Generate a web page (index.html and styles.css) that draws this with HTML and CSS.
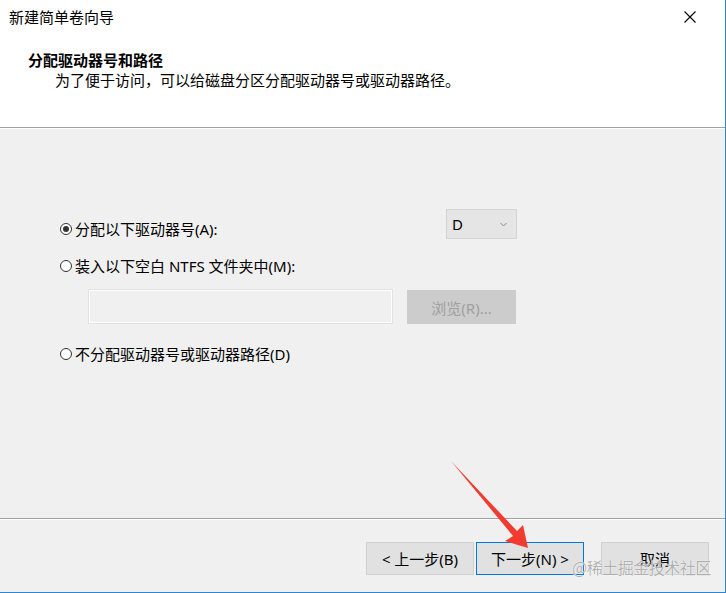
FILE: index.html
```html
<!DOCTYPE html>
<html lang="zh-CN">
<head>
<meta charset="utf-8">
<title>新建简单卷向导</title>
<link rel="stylesheet" href="styles.css">
</head>
<body>
<div class="window">
  <header class="header">
    <div class="titlebar">
      <span class="title">新建简单卷向导</span>
      <svg class="close" width="12" height="12" viewBox="0 0 12 12"><path d="M0.5 0.5L11.5 11.5M11.5 0.5L0.5 11.5" stroke="#000" stroke-width="1.1" fill="none"/></svg>
    </div>
    <h1 class="heading">分配驱动器号和路径</h1>
    <p class="subtitle">为了便于访问，可以给磁盘分区分配驱动器号或驱动器路径。</p>
  </header>
  <main class="body">
    <div class="row row-first">
      <label class="option option-first"><span class="radio checked"></span>分配以下驱动器号(A):</label>
      <div class="select"><span>D</span><svg width="7" height="5" viewBox="0 0 7 5"><path d="M0.5 1L3.5 4L6.5 1" stroke="#8a8a8a" stroke-width="1" fill="none"/></svg></div>
    </div>
    <label class="option option-second"><span class="radio"></span>装入以下空白 NTFS 文件夹中(M):</label>
    <div class="path-row">
      <div class="textbox"></div>
      <div class="browse">浏览(R)...</div>
    </div>
    <label class="option option-third"><span class="radio"></span>不分配驱动器号或驱动器路径(D)</label>
  </main>
  <footer class="footer">
    <div class="btn">&lt; 上一步(B)</div>
    <div class="btn btn-default">下一步(N) &gt;</div>
    <div class="btn btn-cancel">取消</div>
  </footer>
  <svg class="arrow" width="726" height="593" viewBox="0 0 726 593"><polygon points="451,461 517,531 523,525 528,548 505,541 513,536" fill="#f23b30"/></svg>
  <span class="watermark">@稀土掘金技术社区</span>
</div>
</body>
</html>
```
FILE: styles.css
```css
html, body {
  margin: 0;
  padding: 0;
}
body {
  width: 726px;
  height: 593px;
  overflow: hidden;
  background: #f0f0f0;
  font-family: "Noto Sans", "Noto Sans CJK SC", sans-serif;
  font-size: 15px;
  color: #000;
}
.window {
  position: relative;
  box-sizing: border-box;
  width: 726px;
  height: 593px;
  border-right: 1px solid #2a86d6;
  border-bottom: 1px solid #2a86d6;
  display: flex;
  flex-direction: column;
}
.header {
  height: 127px;
  background: #fff;
  border-bottom: 1px solid #a0a0a0;
  flex: none;
}
.titlebar {
  height: 34px;
  display: flex;
  align-items: center;
  justify-content: space-between;
  padding: 0 29px 0 9px;
}
.title {
  line-height: 34px;
}
.close {
  display: block;
}
.heading {
  margin: 16px 0 0 28px;
  font-size: 15px;
  font-weight: 700;
  line-height: 20px;
}
.subtitle {
  margin: 0 0 0 55px;
  line-height: 20px;
}
.body {
  height: 390px;
  flex: none;
  border-top: 1px solid #fff;
  box-sizing: border-box;
  padding: 80px 0 0 60px;
  display: flex;
  flex-direction: column;
  align-items: flex-start;
}
.row {
  width: 457px;
  display: flex;
  justify-content: space-between;
  align-items: flex-start;
}
.option {
  display: flex;
  align-items: center;
  line-height: 20px;
  height: 20px;
}
.option-first {
  margin-top: 10px;
}
.option-second {
  margin-top: 17px;
}
.option-third {
  margin-top: 20px;
}
.radio {
  box-sizing: border-box;
  width: 12px;
  height: 12px;
  border: 1px solid #333;
  border-radius: 50%;
  background: #fff;
  margin-right: 3px;
  display: flex;
  align-items: center;
  justify-content: center;
}
.radio.checked::after {
  content: "";
  width: 6px;
  height: 6px;
  border-radius: 50%;
  background: #333;
}
.select {
  box-sizing: border-box;
  width: 71px;
  height: 30px;
  background: #e5e5e5;
  border: 1px solid #d4d4d4;
  display: flex;
  align-items: center;
  justify-content: space-between;
  padding: 0 9px 0 5px;
  line-height: 20px;
}
.path-row {
  margin: 13px 0 0 28px;
  display: flex;
  align-items: flex-start;
  gap: 14px;
}
.textbox {
  box-sizing: border-box;
  width: 305px;
  height: 35px;
  border: 1px solid #e2e2e2;
  box-shadow: inset 0 0 0 1px #fff;
  background: #f0f0f0;
}
.browse {
  box-sizing: border-box;
  width: 109px;
  height: 34px;
  margin-top: 1px;
  background: #cccccc;
  border: 1px solid #cccccc;
  color: #a0a0a0;
  display: flex;
  align-items: center;
  justify-content: center;
}
.footer {
  flex: 1;
  border-top: 1px solid #a0a0a0;
  box-shadow: inset 0 1px 0 #fff;
  display: flex;
  justify-content: flex-end;
  align-items: flex-start;
  padding: 23px 16px 0 0;
}
.btn {
  box-sizing: border-box;
  width: 108px;
  height: 33px;
  background: #e1e1e1;
  border: 1px solid #d0d0d0;
  display: flex;
  align-items: center;
  justify-content: center;
  margin-left: 2px;
}
.btn-default {
  border-color: #0078d7;
}
.btn-cancel {
  margin-left: 17px;
}
.arrow {
  position: absolute;
  left: 0;
  top: 0;
  pointer-events: none;
}
.watermark {
  position: absolute;
  left: 572px;
  top: 556px;
  font-family: "Noto Sans CJK SC", sans-serif;
  font-size: 16px;
  line-height: 22px;
  color: rgba(150, 150, 150, 0.75);
  text-shadow: 0 0 1px #fff, 0 0 1px #fff;
  letter-spacing: -0.5px;
}
```
